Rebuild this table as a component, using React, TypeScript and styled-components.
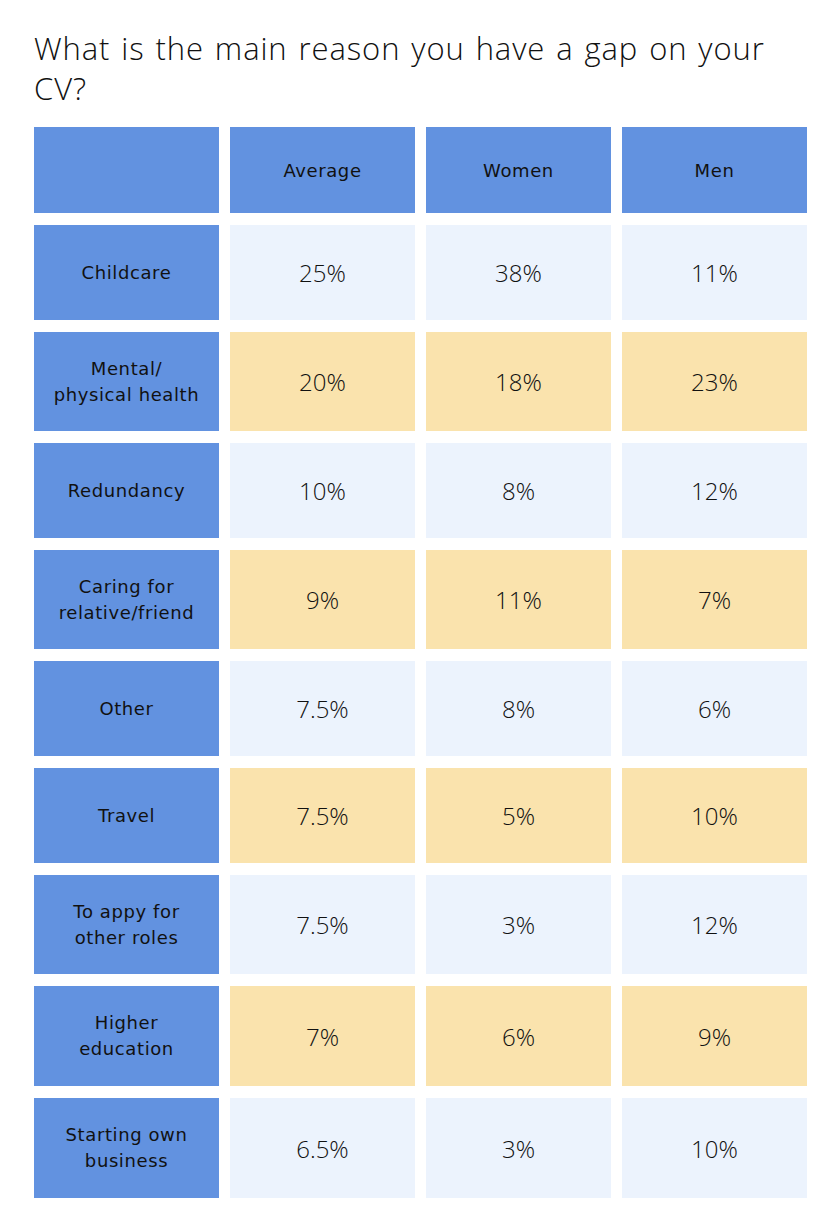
import { FC } from 'react';
import styled, { createGlobalStyle } from 'styled-components';

const GlobalStyle = createGlobalStyle`
   body {
      margin: 0;
      background: #ffffff;
      font-family: "Open Sans", "Liberation Sans", sans-serif;
      color: #111111;
   }
`;

const Page = styled.div`
   width: 834px;
   padding: 28px 27px 25px 34px;
   box-sizing: border-box;
`;

const Title = styled.h1`
   margin: 0 0 19px;
   max-width: 748px;
   font-size: 31px;
   font-weight: 300;
   line-height: 40px;
   letter-spacing: 0.9px;
   word-spacing: 2px;
   color: #111;
`;

const Table = styled.div`
   display: flex;
   flex-direction: column;
   gap: 12px;
`;

const Row = styled.div<{ $height: number }>`
   display: grid;
   grid-template-columns: repeat(4, 185px);
   column-gap: 11px;
   height: ${p => p.$height}px;
`;

type Tone = 'blue' | 'light' | 'yellow';

const tones: Record<Tone, string> = {
   blue: '#6292e0',
   light: '#ecf3fd',
   yellow: '#fae3ad',
};

const Cell = styled.div<{ $tone: Tone }>`
   display: flex;
   align-items: center;
   justify-content: center;
   text-align: center;
   background: ${p => tones[p.$tone]};
`;

const HeadText = styled.span`
   font-family: "DejaVu Sans", "Open Sans", sans-serif;
   font-size: 18px;
   letter-spacing: 0.6px;
   color: #111;
`;

const Label = styled.span`
   font-family: "DejaVu Sans", "Open Sans", sans-serif;
   font-size: 18px;
   line-height: 26px;
   letter-spacing: 0.6px;
   color: #111;
   padding: 0 10px;
`;

const Value = styled.span`
   font-size: 24px;
   font-weight: 300;
   color: #111;
`;

interface RowData {
   label: string[];
   values: string[];
   height: number;
}

const rows: RowData[] = [
   { label: ['Childcare'], values: ['25%', '38%', '11%'], height: 95 },
   { label: ['Mental/', 'physical health'], values: ['20%', '18%', '23%'], height: 99 },
   { label: ['Redundancy'], values: ['10%', '8%', '12%'], height: 95 },
   { label: ['Caring for', 'relative/friend'], values: ['9%', '11%', '7%'], height: 99 },
   { label: ['Other'], values: ['7.5%', '8%', '6%'], height: 95 },
   { label: ['Travel'], values: ['7.5%', '5%', '10%'], height: 95 },
   { label: ['To appy for', 'other roles'], values: ['7.5%', '3%', '12%'], height: 99 },
   { label: ['Higher', 'education'], values: ['7%', '6%', '9%'], height: 100 },
   { label: ['Starting own', 'business'], values: ['6.5%', '3%', '10%'], height: 100 },
];

const App: FC = () => (
   <Page>
      <GlobalStyle />
      <Title>What is the main reason you have a gap on your CV?</Title>
      <Table>
         <Row $height={86}>
            <Cell $tone="blue" />
            {['Average', 'Women', 'Men'].map(h => (
               <Cell key={h} $tone="blue"><HeadText>{h}</HeadText></Cell>
            ))}
         </Row>
         {rows.map((r, i) => {
            const tone: Tone = i % 2 === 0 ? 'light' : 'yellow';
            return (
               <Row key={r.label.join(' ')} $height={r.height}>
                  <Cell $tone="blue">
                     <Label>
                        {r.label.map((l, j) => (
                           <span key={l}>{l}{j < r.label.length - 1 && <br />}</span>
                        ))}
                     </Label>
                  </Cell>
                  {r.values.map((v, j) => (
                     <Cell key={j} $tone={tone}><Value>{v}</Value></Cell>
                  ))}
               </Row>
            );
         })}
      </Table>
   </Page>
);

export default App;
